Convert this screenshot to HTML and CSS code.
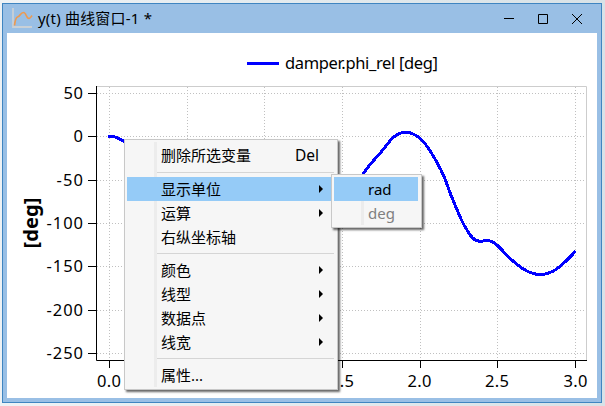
FILE: index.html
```html
<!DOCTYPE html>
<html lang="zh-CN">
<head>
<meta charset="utf-8">
<title>y(t) 曲线窗口-1 *</title>
<link rel="stylesheet" href="styles.css">
</head>
<body>
<main class="window">
  <header class="titlebar">
    <svg class="app-icon" width="22" height="20" viewBox="0 0 22 20" fill="none">
      <path d="M1 0V19H20" stroke="#c9d0d6" stroke-width="1.800"/>
      <path d="M2.500 17.500C3 13 3.500 9.500 5.500 9C8.500 8.500 8 4.500 11.500 4.500C14.500 4.500 14 10.500 17 10.500C18.500 10.500 19 9 20 7.500" stroke="#ec9a52" stroke-width="1.700"/>
    </svg>
    <h1 class="title">y(t) 曲线窗口-1 *</h1>
    <div class="controls">
      <svg width="10" height="10" viewBox="0 0 10 10" stroke="#000" fill="none"><path d="M0 4.500H10"/></svg>
      <svg width="10" height="10" viewBox="0 0 10 10" stroke="#000" fill="none"><path d="M.5 .5H9.500V9.500H.5Z"/></svg>
      <svg width="10" height="10" viewBox="0 0 10 10" stroke="#000" fill="none"><path d="M0 0L10 10M10 0L0 10"/></svg>
    </div>
  </header>
  <section class="content">
    <svg class="chart" width="590" height="365" viewBox="7 33 590 365">
      <path class="series" d="M247 63.500H279"/>
      <text class="label" x="285" y="69" textLength="153">damper.phi_rel [deg]</text>
      <g class="grid">
        <path d="M97 93.500H586M97 136.500H586M97 180.500H586M97 223.500H586M97 266.500H586M97 310.500H586M97 353.500H586"/>
        <path d="M109.500 87V360M187.500 87V360M264.500 87V360M342.500 87V360M420.500 87V360M497.500 87V360M575.500 87V360"/>
      </g>
      <path class="frame" d="M97 86.500H586.500V360"/>
      <path class="axis" d="M96.500 86V360.500H587M88 93.500H96M88 136.500H96M88 180.500H96M88 223.500H96M88 266.500H96M88 310.500H96M88 353.500H96M109.500 361V368M187.500 361V368M264.500 361V368M342.500 361V368M420.500 361V368M497.500 361V368M575.500 361V368"/>
      <g class="label end">
        <text x="83" y="99" textLength="19.500">50</text>
        <text x="83" y="142">0</text>
        <text x="83" y="186" textLength="26.500">-50</text>
        <text x="83" y="229" textLength="36.500">-100</text>
        <text x="83" y="272" textLength="36.500">-150</text>
        <text x="83" y="316" textLength="36.500">-200</text>
        <text x="83" y="359" textLength="36.500">-250</text>
      </g>
      <g class="label middle">
        <text x="109" y="386.500" textLength="24">0.0</text>
        <text x="342" y="386.500" textLength="24">1.5</text>
        <text x="419.500" y="386.500" textLength="24">2.0</text>
        <text x="497" y="386.500" textLength="24">2.5</text>
        <text x="575.500" y="386.500" textLength="24">3.0</text>
      </g>
      <text class="axis-title" transform="translate(37.500 223) rotate(-90)" textLength="51">[deg]</text>
      <path class="series" d="M108 136.500H112C117 137 121 139 126 143M352 192C356 185 359 180 363.500 173.500C369 165 375 159 380 153.300S387 144 391.700 139S400 132.300 405.700 132.300S416 134.500 421.700 140S433 155 438.300 165S443.500 174 446.700 183.500S452 198 455 205S461 220 465 226.700S473 241.300 480 241.300C482.500 241.300 484.500 240.500 487.300 240.500C494 240.500 499 247 506.700 255S528 274.500 540 274.500S560 268 575.700 251"/>
    </svg>
  </section>
</main>

<nav class="menu main-menu">
  <div class="item">删除所选变量<span class="key">Del</span></div>
  <hr class="wide">
  <div class="item active">显示单位<i class="arrow"></i></div>
  <div class="item">运算<i class="arrow"></i></div>
  <div class="item">右纵坐标轴</div>
  <hr>
  <div class="item">颜色<i class="arrow"></i></div>
  <div class="item">线型<i class="arrow"></i></div>
  <div class="item">数据点<i class="arrow"></i></div>
  <div class="item">线宽<i class="arrow"></i></div>
  <hr>
  <div class="item">属性...</div>
</nav>
<nav class="menu sub-menu">
  <div class="item active">rad</div>
  <div class="item disabled">deg</div>
</nav>
</body>
</html>
```
FILE: styles.css
```css
* { box-sizing: border-box; }
body {
  margin: 0;
  height: 406px;
  padding: 3px 3px 3px 2px;
  overflow: hidden;
  background: linear-gradient(90deg, #eef2f5, #d8e2e7);
  font-family: "Noto Sans", "Noto Sans CJK SC", sans-serif;
  color: #000;
}
.window {
  display: flex;
  flex-direction: column;
  width: 600px;
  height: 400px;
  padding: 0 4px 4px;
  border: 1px solid #3f85c1;
  background: #99bfe5;
}
.titlebar {
  display: flex;
  align-items: center;
  flex: 0 0 29px;
  padding: 0 15px 0 5px;
}
.app-icon { flex: none; margin: 0 4px 1px 0; }
.title {
  flex: 1;
  margin: 0;
  font-size: 15px;
  font-weight: 400;
  letter-spacing: .2px;
  line-height: 29px;
}
.controls { display: flex; gap: 24px; }
.content { background: #fff; height: 365px; }
.chart { display: block; }
.chart path { fill: none; }
.chart .series { stroke: #00f; stroke-width: 3; shape-rendering: crispEdges; }
.grid path { stroke: #c0c0c0; stroke-dasharray: 1 2; }
.chart .frame { stroke: #cdcdcd; }
.chart .axis { stroke: #000; }
.label { font-size: 16.5px; }
.end { text-anchor: end; }
.middle, .axis-title { text-anchor: middle; }
.axis-title { font-size: 20px; font-weight: 700; }

.menu {
  position: absolute;
  padding: 2px;
  border: 1px solid #c8c8c8;
  background: linear-gradient(#ececec, #ececec) 29px 2px / 3px calc(100% - 4px) no-repeat, #f6f6f6;
  box-shadow: 2px 2px 2px rgba(0, 0, 0, .6);
  font-size: 15px;
}
.main-menu {
  left: 124px;
  top: 139px;
  width: 214px;
  height: 251px;
  padding-top: 3px;
}
.sub-menu {
  left: 331px;
  top: 174px;
  width: 91px;
  height: 54px;
}
.item {
  display: flex;
  align-items: center;
  height: 24px;
  padding: 0 16px 0 34px;
  line-height: 24px;
  white-space: nowrap;
}
.active { background: rgba(145, 201, 247, .96); }
.sub-menu .active { margin-right: 1px; }
.disabled { color: #808080; }
.key { margin-left: auto; font-size: 15.5px; }
.arrow {
  margin: 0 -4px 1px auto;
  border: solid transparent;
  border-width: 4px 0 4px 4px;
  border-left-color: #000;
}
hr {
  height: 1px;
  margin: 4px 1px 4px 30px;
  border: 0;
  background: #d5d5d5;
}
.wide { margin-top: 5px; }
```
